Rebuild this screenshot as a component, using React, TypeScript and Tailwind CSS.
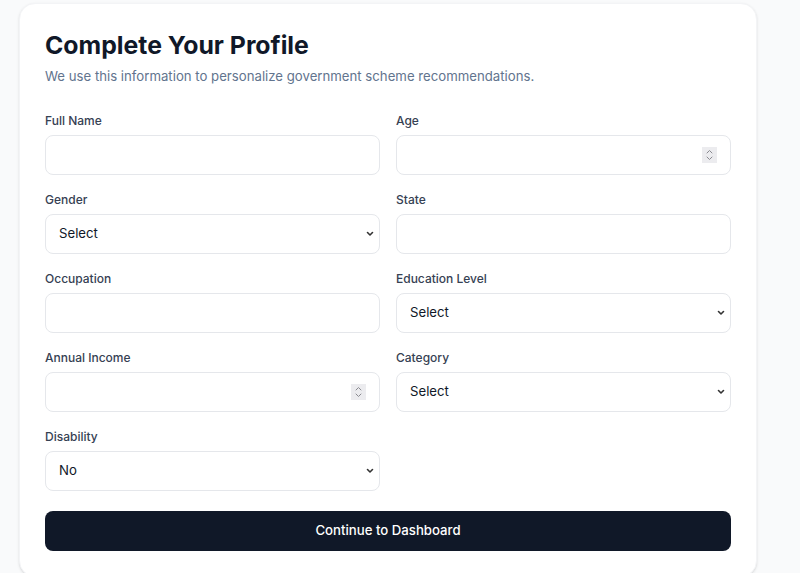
import type { ReactNode } from "react";

function Field({ label, children }: { label: string; children: ReactNode }) {
  return (
    <div className="flex flex-col">
      <label className="mb-1.5 text-xs leading-4 font-medium text-gray-700">{label}</label>
      {children}
    </div>
  );
}

const inputCls =
  "h-10 w-full rounded-lg border border-gray-200 bg-white px-[13px] text-[13.2px] text-gray-900 outline-none";

function TextInput() {
  return <input type="text" className={inputCls} />;
}

// number field, spinner drawn to look like chromium's
function NumberInput() {
  return (
    <div className="relative">
      <input type="number" className={`${inputCls} [appearance:textfield] [&::-webkit-inner-spin-button]:appearance-none`} />
      <span className="pointer-events-none absolute right-[14px] top-[12px] flex h-[16px] w-[15px] items-center justify-center bg-[#ececef]">
        <svg width="7" height="12" viewBox="0 0 7 12" fill="none" stroke="#8a8a90" strokeWidth="1" strokeLinecap="round" strokeLinejoin="round">
          <path d="M1 4 3.5 1.5 6 4" />
          <path d="M1 8 3.5 10.5 6 8" />
        </svg>
      </span>
    </div>
  );
}

function Select({ value, options }: { value: string; options: string[] }) {
  return (
    <div className="relative">
      <select defaultValue={value} className={`${inputCls} appearance-none`}>
        {options.map((o) => (
          <option key={o}>{o}</option>
        ))}
      </select>
      <svg
        className="pointer-events-none absolute right-[6px] top-[17px]"
        width="8"
        height="6"
        viewBox="0 0 8 6"
        fill="none"
        stroke="#333"
        strokeWidth="1.6"
        strokeLinecap="round"
        strokeLinejoin="round"
      >
        <path d="M1.5 1.5 4 4 6.5 1.5" />
      </svg>
    </div>
  );
}

export default function App() {
  return (
    <div
      className="min-h-screen bg-gray-50 pt-[3px] pl-[19px]"
      style={{ fontFamily: "Inter, 'Noto Sans', sans-serif" }}
    >
      <div className="w-[738px] rounded-2xl border border-gray-100 bg-white p-[25px] shadow-sm">
        <h1 className="text-[24.8px] leading-8 font-bold text-gray-900">Complete Your Profile</h1>
        <p className="mt-[5px] text-[13.2px] leading-5 text-slate-500">
          We use this information to personalize government scheme recommendations.
        </p>

        <div className="mt-[27px] grid grid-cols-2 gap-x-4 gap-y-[17px]">
          <Field label="Full Name">
            <TextInput />
          </Field>
          <Field label="Age">
            <NumberInput />
          </Field>
          <Field label="Gender">
            <Select value="Select" options={["Select", "Male", "Female", "Other"]} />
          </Field>
          <Field label="State">
            <TextInput />
          </Field>
          <Field label="Occupation">
            <TextInput />
          </Field>
          <Field label="Education Level">
            <Select value="Select" options={["Select", "Primary", "Secondary", "Graduate", "Postgraduate"]} />
          </Field>
          <Field label="Annual Income">
            <NumberInput />
          </Field>
          <Field label="Category">
            <Select value="Select" options={["Select", "General", "OBC", "SC", "ST"]} />
          </Field>
          <Field label="Disability">
            <Select value="No" options={["No", "Yes"]} />
          </Field>
        </div>

        <button className="mt-5 h-10 w-full rounded-lg bg-gray-900 text-[13.2px] font-medium text-white">
          Continue to Dashboard
        </button>
      </div>
    </div>
  );
}
